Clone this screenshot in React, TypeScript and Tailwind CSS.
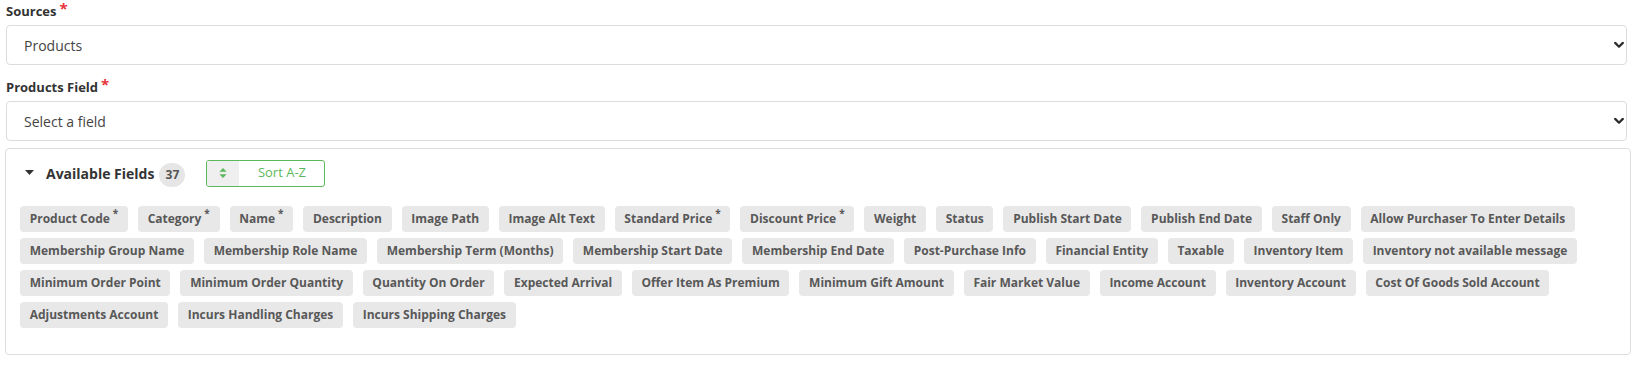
import React from "react";

type Field = { name: string; req?: boolean };

const fields: Field[] = [
  { name: "Product Code", req: true },
  { name: "Category", req: true },
  { name: "Name", req: true },
  { name: "Description" },
  { name: "Image Path" },
  { name: "Image Alt Text" },
  { name: "Standard Price", req: true },
  { name: "Discount Price", req: true },
  { name: "Weight" },
  { name: "Status" },
  { name: "Publish Start Date" },
  { name: "Publish End Date" },
  { name: "Staff Only" },
  { name: "Allow Purchaser To Enter Details" },
  { name: "Membership Group Name" },
  { name: "Membership Role Name" },
  { name: "Membership Term (Months)" },
  { name: "Membership Start Date" },
  { name: "Membership End Date" },
  { name: "Post-Purchase Info" },
  { name: "Financial Entity" },
  { name: "Taxable" },
  { name: "Inventory Item" },
  { name: "Inventory not available message" },
  { name: "Minimum Order Point" },
  { name: "Minimum Order Quantity" },
  { name: "Quantity On Order" },
  { name: "Expected Arrival" },
  { name: "Offer Item As Premium" },
  { name: "Minimum Gift Amount" },
  { name: "Fair Market Value" },
  { name: "Income Account" },
  { name: "Inventory Account" },
  { name: "Cost Of Goods Sold Account" },
  { name: "Adjustments Account" },
  { name: "Incurs Handling Charges" },
  { name: "Incurs Shipping Charges" },
];

function Chevron() {
  return (
    <svg
      className="pointer-events-none absolute right-[6px] top-1/2 -translate-y-1/2"
      width="10"
      height="7"
      viewBox="0 0 10 7"
      fill="none"
    >
      <path d="M1.2 1.4 L5 5.2 L8.8 1.4" stroke="#2b2b2b" strokeWidth="2.2" strokeLinecap="round" strokeLinejoin="round" />
    </svg>
  );
}

function Label({ text }: { text: string }) {
  return (
    <label className="flex items-start text-[13px] font-bold leading-[20px] text-[#333333]">
      {text}
      <span className="ml-[3px] text-[15px] leading-[14px] text-[#e8333a]">*</span>
    </label>
  );
}

function SelectBox({ value, options }: { value: string; options: string[] }) {
  return (
    <div className="relative mx-[1px] pr-[3px]">
      <select
        defaultValue={value}
        className="h-[40px] w-full appearance-none rounded-[4px] border border-[#dcdcdc] bg-white pl-[17px] pr-[30px] text-[14px] text-[#444444] outline-none"
      >
        {options.map((o) => (
          <option key={o} value={o}>
            {o}
          </option>
        ))}
      </select>
      <Chevron />
    </div>
  );
}

export default function App() {
  return (
    <div className="bg-white pl-[5px] pr-[8px] pt-[1px] font-['Open_Sans',sans-serif]">
      <div className="pl-[1px]">
        <Label text="Sources" />
      </div>
      <div className="mt-[4px]">
        <SelectBox value="Products" options={["Products"]} />
      </div>
      <div className="mt-[12px] pl-[1px]">
        <Label text="Products Field" />
      </div>
      <div className="mt-[4px]">
        <SelectBox value="Select a field" options={["Select a field"]} />
      </div>

      <div className="mt-[7px] rounded-[4px] border border-[#dddddd] pb-[26px] pt-[11px]">
        <div className="flex h-[26px] items-center pl-[19px]">
          <svg width="9" height="5" viewBox="0 0 9 5" className="mt-[-1px]">
            <path d="M0 0 L9 0 L4.5 5 Z" fill="#333333" />
          </svg>
          <span className="ml-[12px] text-[14px] font-bold text-[#333333]">Available Fields</span>
          <span className="ml-[5px] mt-[3px] flex h-[24px] w-[26px] items-center justify-center rounded-full bg-[#e6e6e6] text-[12px] font-bold text-[#555555]">
            37
          </span>
          <button className="ml-[21px] flex h-[27px] w-[119px] items-stretch overflow-hidden rounded-[3px] border border-[#5cb85c] bg-white">
            <span className="flex w-[32px] items-center justify-center bg-[#efefef]">
              <svg width="8" height="10" viewBox="0 0 8 10">
                <path d="M4 0 L7.6 3.8 L0.4 3.8 Z" fill="#5cb85c" />
                <path d="M4 10 L7.6 6.2 L0.4 6.2 Z" fill="#5cb85c" />
              </svg>
            </span>
            <span className="flex flex-1 items-center justify-center text-[13px] text-[#5cb85c]">Sort A-Z</span>
          </button>
        </div>

        <div className="mt-[20px] flex flex-wrap gap-x-[10px] gap-y-[6px] pl-[14px] pr-[14px]">
          {fields.map((f) => (
            <span
              key={f.name}
              className="flex h-[26px] items-center rounded-[4px] bg-[#e8e8e8] px-[9.7px] text-[12px] font-bold text-[#585858]"
            >
              {f.name}
              {f.req && <span className="ml-[3px] self-start pt-[2px] text-[10px] leading-[10px]">*</span>}
            </span>
          ))}
        </div>
      </div>
    </div>
  );
}
